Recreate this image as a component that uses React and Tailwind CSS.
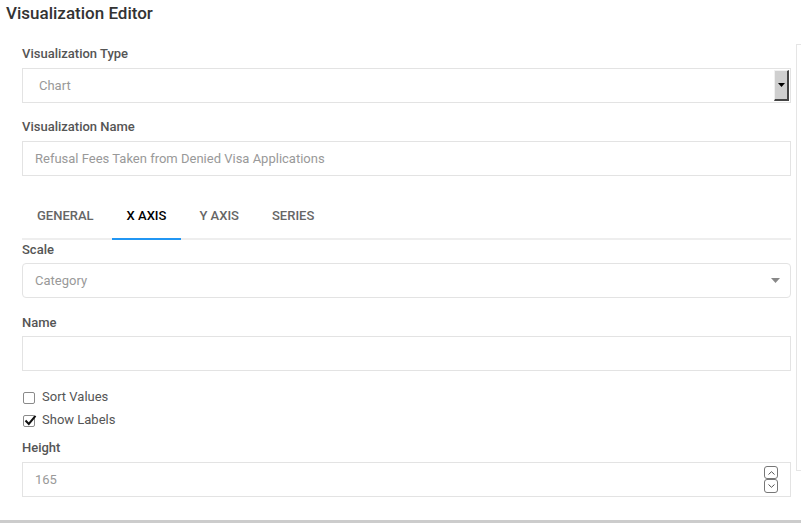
import React from "react";

const font = { fontFamily: "Roboto, 'Liberation Sans', sans-serif" };

function Label({ children, className = "" }) {
  return (
    <div className={"text-[13px] leading-[16px] font-medium text-[#555555] " + className}>{children}</div>
  );
}

function Box({ children, className = "" }) {
  return (
    <div className={"h-[35px] border border-[#e3e3e3] bg-white flex items-center text-[13px] text-[#999999] " + className}>
      {children}
    </div>
  );
}

function Checkbox({ checked }) {
  return (
    <div className="relative w-[12px] h-[12px] border border-[#8a8a8a] rounded-[2px] bg-white mt-[2px]">
      {checked && (
        <svg className="absolute left-[0px] top-[-2px]" width="13" height="13" viewBox="0 0 13 13">
          <path d="M1.5 6.5 L4.8 10 L11.5 1.8" fill="none" stroke="#111" strokeWidth="2" />
        </svg>
      )}
    </div>
  );
}

export default function App() {
  const tabs = ["GENERAL", "X AXIS", "Y AXIS", "SERIES"];
  return (
    <div style={font} className="w-[801px] h-[523px] bg-white flex flex-col overflow-hidden">
      <div className="flex flex-1">
        <div className="w-[796px] shrink-0 flex flex-col">
          <div className="pl-[6px] pt-[3px] text-[17px] leading-[20px] font-medium text-[#333333]">Visualization Editor</div>
          <div className="pl-[22px] pr-[5px] flex flex-col">
            <Label className="mt-[23px]">Visualization Type</Label>
            <Box className="mt-[6px] pl-[16px] pr-[1px] justify-between">
              <span>Chart</span>
              <div className="w-[15px] h-[31px] bg-[#cfcfcf] border-t border-l border-t-[#f0f0f0] border-l-[#f0f0f0] border-r-2 border-b-2 border-r-[#444] border-b-[#444] flex items-center justify-center">
                <svg width="7" height="4" viewBox="0 0 7 4"><path d="M0 0 H7 L3.5 4 Z" fill="#000" /></svg>
              </div>
            </Box>
            <Label className="mt-[16px]">Visualization Name</Label>
            <Box className="mt-[6px] pl-[12px]">Refusal Fees Taken from Denied Visa Applications</Box>

            <div className="mt-[15px] flex gap-[3px] border-b-2 border-[#eeeeee] h-[49px]">
              {tabs.map((t) => {
                const active = t === "X AXIS";
                return (
                  <div
                    key={t}
                    className={
                      "px-[15px] h-[49px] flex items-center text-[13px] font-medium mb-[-2px] border-b-2 pt-[2px] " +
                      (active ? "text-black border-[#2196f3]" : "text-[#666666] border-transparent")
                    }
                  >
                    {t}
                  </div>
                );
              })}
            </div>

            <Label className="mt-[2px]">Scale</Label>
            <Box className="mt-[5px] pl-[12px] pr-[10px] rounded-[4px] justify-between">
              <span>Category</span>
              <svg width="9" height="5" viewBox="0 0 9 5"><path d="M0 0 H9 L4.5 5 Z" fill="#888" /></svg>
            </Box>
            <Label className="mt-[17px]">Name</Label>
            <Box className="mt-[5px]" />

            <div className="mt-[18px] flex items-center gap-[7px] text-[13px] leading-[16px] text-[#555555] pl-[1px]">
              <Checkbox checked={false} />
              <span>Sort Values</span>
            </div>
            <div className="mt-[7px] flex items-center gap-[7px] text-[13px] leading-[16px] text-[#555555] pl-[1px]">
              <Checkbox checked={true} />
              <span>Show Labels</span>
            </div>
            <Label className="mt-[12px]">Height</Label>
            <Box className="mt-[6px] pl-[12px] pr-[12px] justify-between">
              <span>165</span>
              <div className="flex flex-col">
                <div className="w-[14px] h-[13px] border border-[#777] rounded-[3px] flex items-center justify-center">
                  <svg width="7" height="4" viewBox="0 0 7 4"><path d="M0.5 3.5 L3.5 0.7 L6.5 3.5" fill="none" stroke="#555" strokeWidth="1" /></svg>
                </div>
                <div className="w-[14px] h-[14px] border border-[#777] rounded-[3px] flex items-center justify-center">
                  <svg width="7" height="4" viewBox="0 0 7 4"><path d="M0.5 0.5 L3.5 3.3 L6.5 0.5" fill="none" stroke="#555" strokeWidth="1" /></svg>
                </div>
              </div>
            </Box>
          </div>
        </div>
        <div className="flex-1 mt-[44px] h-[427px] border border-r-0 border-[#e5e5e5]" />
      </div>
      <div className="h-[3px] bg-[#cccccc]" />
    </div>
  );
}
